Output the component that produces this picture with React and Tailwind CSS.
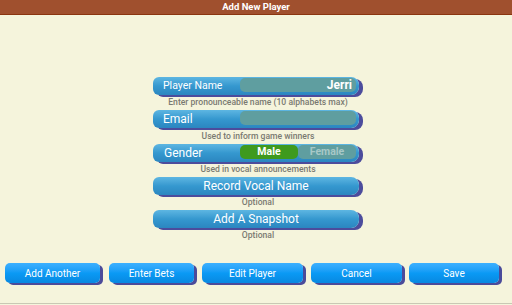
import React from "react";

const font = { fontFamily: "Roboto, 'Noto Sans', sans-serif" };

function Bar({ children, className = "" }) {
  return (
    <div
      className={`relative h-[18px] w-[206px] rounded-l-[6px] rounded-r-[8px] bg-gradient-to-b from-[#5db6e2] via-[#3598cf] to-[#2b86c0] shadow-[4px_2px_0_#4c4c9c] flex items-center ${className}`}
    >
      {children}
    </div>
  );
}

function Hint({ children }) {
  return (
    <div className="h-[15.3px] flex items-center justify-center text-[8.6px] font-medium text-[#7a7a72]">
      {children}
    </div>
  );
}

function ActionButton({ label, width, className = "" }) {
  return (
    <button
      className={`h-[20px] ${width} ${className} rounded-[5px] bg-gradient-to-b from-[#3cb0ff] via-[#0a9af5] to-[#0888e0] shadow-[3px_2px_0_#4b4b9a] text-white text-[10px] flex items-center justify-center`}
    >
      {label}
    </button>
  );
}

export default function App() {
  return (
    <div style={font} className="w-[512px] h-[305px] bg-[#f5f4dc] flex flex-col">
      <div className="h-[15px] bg-[#a0502e] border-b border-[#8a3510] flex items-center justify-center text-white text-[9.5px] font-bold">
        Add New Player
      </div>

      <div className="flex-1 flex flex-col items-start pl-[153px] pt-[62px]">
        <Bar>
          <span className="pl-[10px] text-white text-[10.5px]">Player Name</span>
          <div className="absolute left-[87px] right-[3px] top-[1px] bottom-[3px] rounded-[5px] bg-[#5f9ea0] flex items-center justify-end pr-[4px] text-white text-[12px] font-bold">
            Jerri
          </div>
        </Bar>
        <div className="w-[210px]">
          <Hint>Enter pronounceable name (10 alphabets max)</Hint>
        </div>

        <Bar>
          <span className="pl-[10px] text-white text-[12px]">Email</span>
          <div className="absolute left-[87px] right-[3px] top-[1px] bottom-[3px] rounded-[5px] bg-[#5f9ea0]" />
        </Bar>
        <div className="w-[210px]">
          <Hint>Used to inform game winners</Hint>
        </div>

        <Bar>
          <span className="pl-[11px] text-white text-[12px]">Gender</span>
          <div className="absolute left-[87px] right-[3px] top-[1px] bottom-[3px] flex">
            <div className="w-[58px] rounded-[5px] bg-[#3e9a1e] flex items-center justify-center text-white text-[10.5px] font-bold">
              Male
            </div>
            <div className="flex-1 rounded-[5px] bg-[#5f9ea0] flex items-center justify-center text-[#a7c8c7] text-[10.5px] font-bold">
              Female
            </div>
          </div>
        </Bar>
        <div className="w-[210px]">
          <Hint>Used in vocal announcements</Hint>
        </div>

        <Bar className="justify-center">
          <span className="text-white text-[12px]">Record Vocal Name</span>
        </Bar>
        <div className="w-[210px]">
          <Hint>Optional</Hint>
        </div>

        <Bar className="justify-center">
          <span className="text-white text-[12px]">Add A Snapshot</span>
        </Bar>
        <div className="w-[210px]">
          <Hint>Optional</Hint>
        </div>
      </div>

      <div className="h-[40px] flex items-start pl-[5px]">
        <ActionButton label="Add Another" width="w-[95px]" />
        <ActionButton label="Enter Bets" width="w-[85px]" className="ml-[9px]" />
        <ActionButton label="Edit Player" width="w-[101px]" className="ml-[8px]" />
        <ActionButton label="Cancel" width="w-[91px]" className="ml-[8px]" />
        <ActionButton label="Save" width="w-[90px]" className="ml-[7px]" />
      </div>
      <div className="h-[2px] border-t border-[#c9c8b4]" />
    </div>
  );
}
